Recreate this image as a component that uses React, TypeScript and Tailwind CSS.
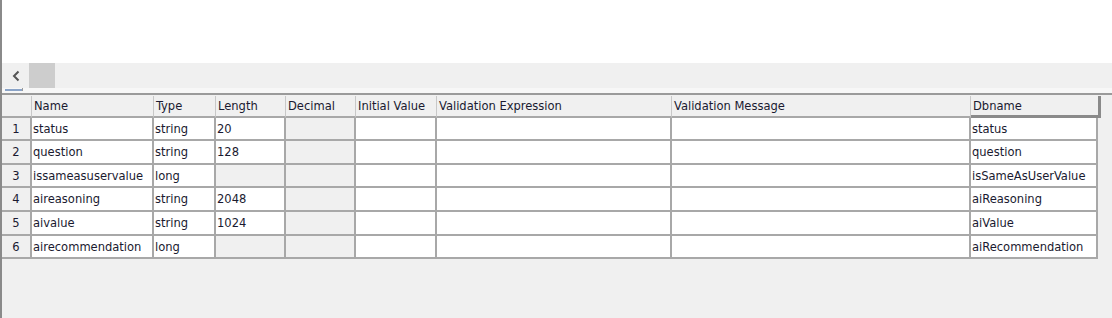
import React from "react";

const COLS = [
  { key: "num", label: "", w: 30 },
  { key: "name", label: "Name", w: 122 },
  { key: "type", label: "Type", w: 62 },
  { key: "length", label: "Length", w: 70 },
  { key: "decimal", label: "Decimal", w: 70 },
  { key: "initial", label: "Initial Value", w: 81 },
  { key: "vexpr", label: "Validation Expression", w: 235 },
  { key: "vmsg", label: "Validation Message", w: 299 },
  { key: "dbname", label: "Dbname", w: 127 },
];

const ROWS = [
  { name: "status", type: "string", length: "20", dbname: "status", h: 23 },
  { name: "question", type: "string", length: "128", dbname: "question", h: 24 },
  { name: "issameasuservalue", type: "long", length: null, dbname: "isSameAsUserValue", h: 23 },
  { name: "aireasoning", type: "string", length: "2048", dbname: "aiReasoning", h: 24 },
  { name: "aivalue", type: "string", length: "1024", dbname: "aiValue", h: 24 },
  { name: "airecommendation", type: "long", length: null, dbname: "aiRecommendation", h: 23 },
];

export default function App() {
  return (
    <div
      className="w-[1112px] h-[318px] flex flex-col bg-[#f0f0f0] border-l-2 border-[#8a8a8a] text-[12.8px] text-[#1a1a30] overflow-hidden"
      style={{ fontFamily: "Tahoma, 'DejaVu Sans Condensed', 'Liberation Sans', sans-serif" }}
    >
      {/* blank form area */}
      <div className="h-[63px] bg-white" />

      {/* horizontal scroller */}
      <div className="h-[25px] bg-[#f0f0f0] flex items-center">
        <span className="w-[27px] flex justify-center">
          <svg width="12" height="14" viewBox="0 0 12 14">
            <path d="M8.5 2.5 L4 7 L8.5 11.5" fill="none" stroke="#555" strokeWidth="2" />
          </svg>
        </span>
        <div className="w-[26px] h-[25px] bg-[#cdcdcd]" />
      </div>

      {/* splitter marker */}
      <div className="h-[5px] bg-[#f7f7f7] relative">
        <div className="absolute left-[3px] top-[1px] w-[17px] h-[2px] bg-[#8aa3c7]" />
        <div className="absolute left-[20px] top-0 w-[1px] h-[3px] bg-[#9a9a9a]" />
      </div>

      {/* grid */}
      <div className="border-t-2 border-[#9a9a9a] pt-[1px] flex flex-col">
        <div className="flex h-[22px]">
          {COLS.map((c, i) => (
            <div
              key={c.key}
              className={`bg-[#f0f0f0] border-r border-[#c8c8c8] px-[2px] flex items-center whitespace-nowrap ${
                i === COLS.length - 1 ? "border-r-[3px] border-r-[#8a8a8a] border-b-[3px] border-b-[#8a8a8a]" : "border-b-2 border-b-[#a8a8a8]"
              }`}
              style={{ width: c.w + (i === COLS.length - 1 ? 3 : 0) }}
            >
              {c.label}
            </div>
          ))}
        </div>
        {ROWS.map((r, ri) => {
          const vals: string[] = [String(ri + 1), r.name, r.type, r.length ?? "", "", "", "", "", r.dbname];
          return (
            <div key={ri} className="flex" style={{ height: r.h }}>
              {COLS.map((c, i) => {
                const gray = i === 0 || i === 4 || (i === 3 && r.length === null);
                return (
                  <div
                    key={c.key}
                    className={`border-r-2 border-b-2 border-[#a8a8a8] flex items-center whitespace-nowrap ${
                      gray ? "bg-[#f0f0f0]" : "bg-white"
                    } ${i === 0 ? "justify-center" : "px-[1px]"}`}
                    style={{ width: c.w }}
                  >
                    {vals[i]}
                  </div>
                );
              })}
            </div>
          );
        })}
      </div>
    </div>
  );
}
